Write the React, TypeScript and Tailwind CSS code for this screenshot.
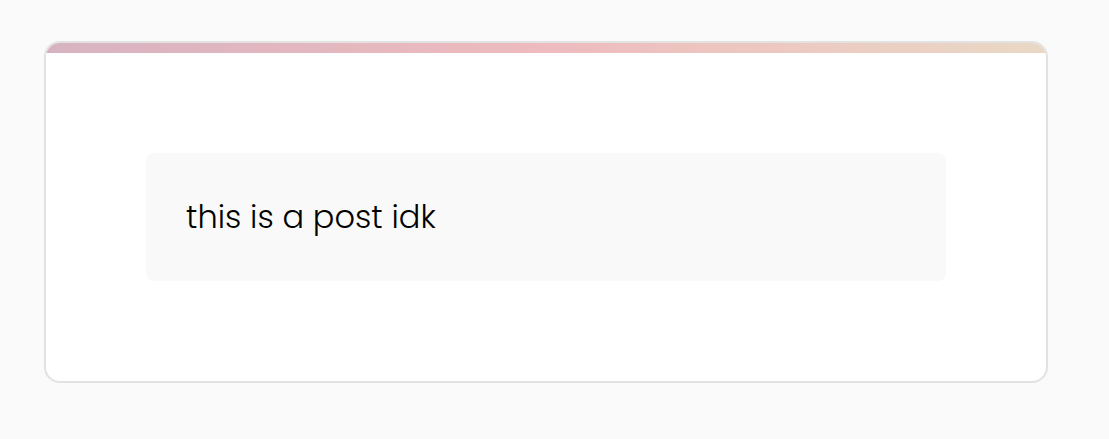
export default function App() {
  return (
    <div className="min-h-screen bg-[#fafafa] pt-[41px] pl-[44px]">
      <div className="w-[1004px] overflow-hidden rounded-2xl border-2 border-[#e2e2e2] bg-white">
        <div className="h-[10px] bg-gradient-to-r from-[#d7b3c1] via-[#eebbbe] to-[#e9d8c5]" />
        <div className="p-[100px]">
          <div className="h-[128px] rounded-lg bg-[#f9f9f9] px-10 flex items-center">
            <p className="text-[32px] leading-[48px] font-light text-black font-['Poppins','DejaVu_Sans',sans-serif]">
              this is a post idk
            </p>
          </div>
        </div>
      </div>
    </div>
  );
}
